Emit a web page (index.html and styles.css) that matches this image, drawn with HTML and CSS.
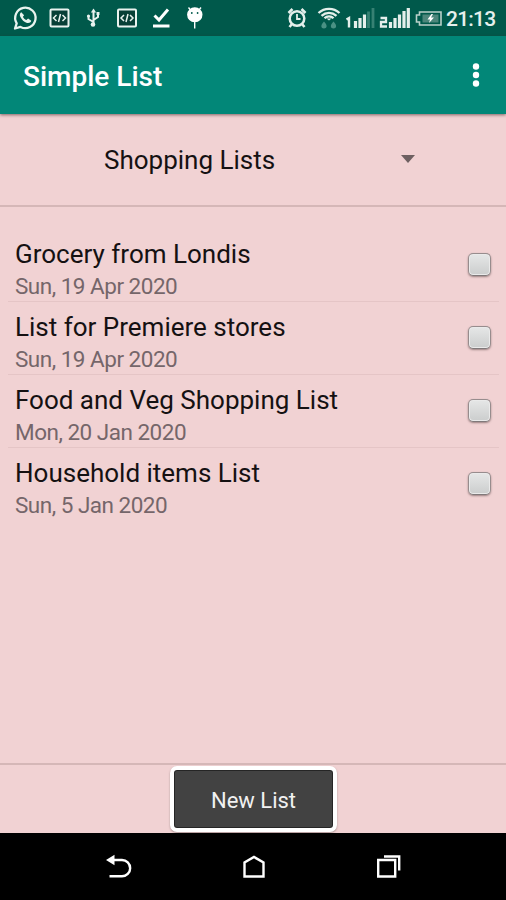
FILE: index.html
```html
<!DOCTYPE html>
<html lang="en">
<head>
<meta charset="utf-8">
<title>Simple List</title>
<link rel="stylesheet" href="styles.css">
</head>
<body>
<div class="phone">
  <div class="status">
    <svg class="status-left" width="210" height="36" viewBox="0 0 210 36" fill="none" stroke="#e9f3ef">
      <path d="M15 28.500l1.700-5.200A10.200 10.200 0 1 1 20.500 26.900Z" stroke-width="2.300" stroke-linejoin="round"/>
      <path d="M21.300 12.300c-1.500.8-1.900 2.700-1 4.500 1.400 3 3.800 5.300 6.700 6.100 2.100.5 3.800-.4 4.300-2.100l-3.200-2.200-1.700 1.400c-1.700-.7-2.900-1.900-3.500-3.300l1.200-1.500Z" fill="#e9f3ef" stroke="none"/>
      <g id="code">
        <rect x="50.500" y="9.500" width="18" height="17" rx="1" fill="#073f36" stroke-width="2"/>
        <path d="M56.500 15l-3 3 3 3M62.500 15l3 3-3 3M60.500 14l-2 8" stroke-width="1.500"/>
      </g>
      <use href="#code" x="67.500"/>
      <path d="M93.500 11v14M93.500 22l-5-3v-3M93.500 20l4.500-3v-3" stroke-width="2"/>
      <path d="M93.500 8.500l2.600 4h-5.200Z" fill="#e9f3ef" stroke="none"/>
      <circle cx="93" cy="24.500" r="2.300" fill="#e9f3ef" stroke="none"/><circle cx="88.500" cy="16" r="1.600" fill="#e9f3ef" stroke="none"/><path d="M96.500 12h3v3h-3Z" fill="#e9f3ef" stroke="none"/>
      <path d="M154.500 15.500l4.500 4.500 9-10.500" stroke="#fff" stroke-width="3"/>
      <path d="M153 26h16.500" stroke="#fff" stroke-width="3"/>
      <path d="M187.800 14.500a7 6.500 0 0 1 14 0c0 4-2.900 7-7 7s-7-3-7-7ZM194.700 20v8.500M190.500 10l-2-2.500M199 10l2-2.500" fill="#fff" stroke="#fff" stroke-width="1.400"/>
      <circle cx="191.800" cy="13" r=".9" fill="#00594b" stroke="none"/><circle cx="197.600" cy="13" r=".9" fill="#00594b" stroke="none"/>
    </svg>
    <svg class="status-right" width="166" height="36" viewBox="280 0 166 36" fill="none" stroke="#e4efeb">
      <circle cx="297" cy="18.500" r="7.300" stroke-width="2.500"/>
      <path d="M297 14v5h3.500" stroke-width="1.800"/>
      <path d="M288.500 13l4-4M305.500 13l-4-4M292 24l-2.500 3M302 24l2.500 3" stroke-width="2.600"/>
      <path d="M318.500 13c6-5.500 15-5.500 21 0M321.500 15.800c4.500-4 10.500-4 15 0M324.500 18.300c2.500-2.500 6.500-2.500 9 0" stroke-width="2.300"/>
      <path d="M326.500 18.500h5l-2.500 2Z" fill="#e4efeb" stroke="none"/>
      <path d="M324 21.500c4 4 3 7 0 7s-4-3 0-7ZM333.500 21.500c4 4 3 7 0 7s-4-3 0-7Z" fill="#4a9184" stroke="none"/>
      <path d="M346.500 19.500l2.500-1.500v9.500" stroke-width="2.400"/>
      <path d="M355.500 21v7M360 18v10M364.500 14.500v13.500" stroke-width="3.200"/>
      <path d="M368.500 11.500v16.500M373 8v20" stroke="#368173" stroke-width="2.800"/>
      <path d="M380.500 18h5.500v4h-5v4.500h6" stroke-width="2.300"/>
      <path d="M390.500 22v6M395 18v10M399.500 14.500v13.500M404 11v17M408.300 8v20" stroke-width="3.200"/>
      <path d="M419.500 12h21.500v13h-21.500v-3h-3v-7h3Z" stroke-width="1.600" stroke="#bad0ca"/>
      <path d="M422.500 14.500h16v8h-16Z" fill="#4c867b" stroke="none"/>
      <path d="M431.500 14l-4 5.500h2.500l-1 3.500 5-5.500h-3l2-3.500Z" fill="#fff" stroke="none"/>
    </svg>
    <span class="clock">21:13</span>
  </div>
  <header class="appbar">
    <h1>Simple List</h1>
    <svg class="more" width="8" height="26" viewBox="0 0 8 26" fill="#fff"><circle cx="4" cy="4.500" r="3.200"/><circle cx="4" cy="13" r="3.200"/><circle cx="4" cy="21.500" r="3.200"/></svg>
  </header>
  <div class="spinner">
    <span class="spinner-label">Shopping Lists</span>
    <svg width="14" height="8" viewBox="0 0 14 8"><path d="M0 0h14L7 8Z" fill="#6e6061"/></svg>
  </div>
  <ul class="list">
    <li><div><p class="name">Grocery from Londis</p><p class="date">Sun, 19 Apr 2020</p></div><span class="box"></span></li>
    <li><div><p class="name">List for Premiere stores</p><p class="date">Sun, 19 Apr 2020</p></div><span class="box"></span></li>
    <li><div><p class="name">Food and Veg Shopping List</p><p class="date">Mon, 20 Jan 2020</p></div><span class="box"></span></li>
    <li><div><p class="name">Household items List</p><p class="date">Sun, 5 Jan 2020</p></div><span class="box"></span></li>
  </ul>
  <div class="footer"><button class="new">New List</button></div>
  <nav class="nav">
    <svg width="26" height="26" viewBox="0 0 26 26" fill="none" stroke="#fff" stroke-width="2.400"><path d="M6 6h10a8 8 0 0 1 0 16.300H3.500"/><path d="M0 6L8.500 .8v10.400Z" fill="#fff" stroke="none"/></svg>
    <svg width="22" height="26" viewBox="0 0 22 26" fill="none" stroke="#fff" stroke-width="2.400"><path d="M1.500 22.500V8.500L11 3l9.500 5.500v14Z"/></svg>
    <svg width="26" height="26" viewBox="0 0 26 26" fill="none" stroke="#fff" stroke-width="2.400"><path d="M3.200 6h17v16.500h-17ZM9 2.500h15.200v14"/></svg>
  </nav>
</div>
</body>
</html>
```
FILE: styles.css
```css
* { box-sizing: border-box; margin: 0; padding: 0; }
body { font-family: Roboto, "Liberation Sans", sans-serif; background: #f1d2d3; }
.phone { width: 506px; height: 900px; display: flex; flex-direction: column; overflow: hidden; background: #f1d2d3; }
.status { height: 36px; flex: none; display: flex; background: #00594b; }
.status-right { margin-left: 70px; }
.clock { font-size: 21px; line-height: 38px; letter-spacing: -.8px; color: #e6f0ed; font-weight: 500; white-space: nowrap; }
.appbar { height: 78px; flex: none; display: flex; align-items: center; justify-content: space-between; padding: 0 26px 0 23px; background: #028778; box-shadow: 0 1px 3px rgba(70, 40, 40, .65); }
.appbar h1 { font-size: 28px; line-height: 34px; font-weight: 500; color: #fff; padding-top: 4px; white-space: nowrap; }
.spinner { height: 93px; flex: none; display: flex; align-items: center; justify-content: space-between; padding: 0 91px 0 104px; border-bottom: 2px solid #d5b7b7; }
.spinner svg { margin-top: -2px; }
.spinner-label { font-size: 26px; color: #151112; padding-top: 1px; white-space: nowrap; }
.list { flex: 1; list-style: none; padding: 22px 7px 0 8px; }
.list li { height: 73.100px; display: flex; justify-content: space-between; padding: 9px 8px 0 7px; border-bottom: 1px solid #e5c5c6; }
.list li:last-child { border-bottom: 0; }
.name { font-size: 26px; line-height: 33px; color: #151112; white-space: nowrap; }
.date { font-size: 22.500px; line-height: 31px; letter-spacing: -.5px; color: #75666a; white-space: nowrap; }
.box { width: 23px; height: 23px; margin-top: 15px; border: 1.500px solid #978c8d; border-bottom-color: #80797a; border-radius: 5px; background: linear-gradient(#e6e7e7, #cbcdcd); box-shadow: inset 0 0 0 1px #eaeaea, 0 1px 2px rgba(70, 50, 50, .5); }
.footer { height: 70px; flex: none; display: flex; justify-content: center; align-items: flex-start; padding: 1px 0 0 1px; border-top: 2px solid #d5b7b7; }
.new { width: 167px; height: 66px; padding-top: 2px; border: 4px solid #fff; border-radius: 7px; background: #424242; color: #f1f1f1; font: 22px Roboto, "Liberation Sans", sans-serif; box-shadow: inset 0 0 0 1px #252525, 0 1px 2px #a99393; }
.nav { height: 67px; flex: none; display: flex; align-items: center; justify-content: space-between; padding: 0 105px 0 106px; background: #000; }
```
